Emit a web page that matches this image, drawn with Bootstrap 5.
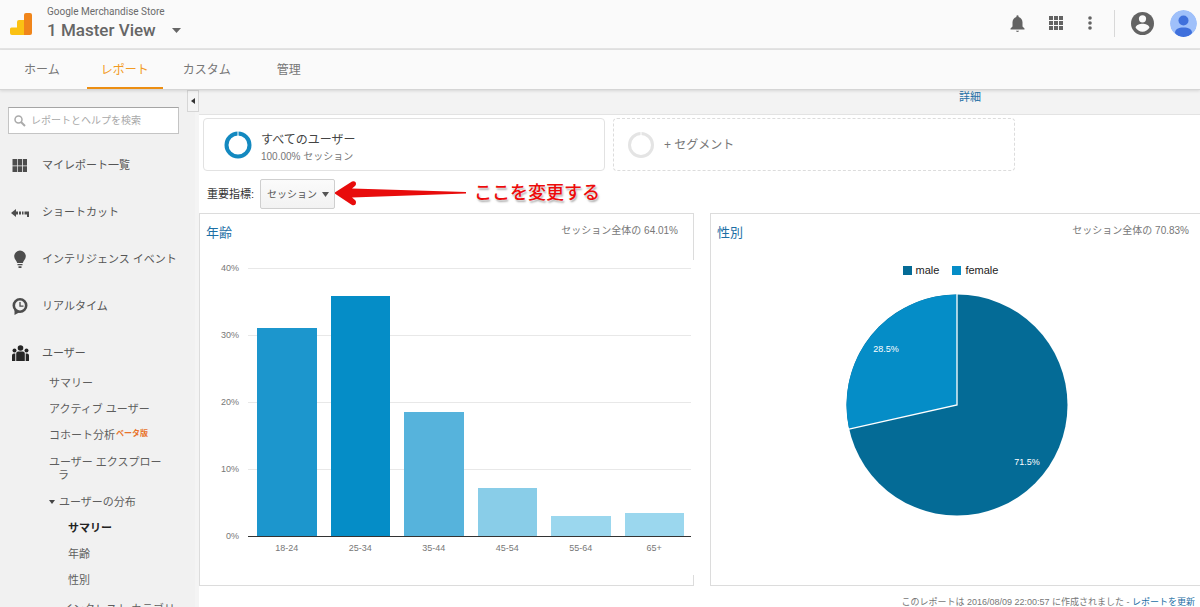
<!DOCTYPE html>
<html lang="ja">
<head>
<meta charset="utf-8">
<meta name="viewport" content="width=device-width, initial-scale=1">
<title>1 Master View - ユーザーの分布</title>
<link href="https://cdn.jsdelivr.net/npm/bootstrap@5.3.0/dist/css/bootstrap.min.css" rel="stylesheet">
<style>
  body { font-family: "Liberation Sans", "Noto Sans CJK JP", sans-serif; font-size: 11px; line-height: 14px; color: #555; background: #fff; }
  a { color: #1d6fa5; text-decoration: none; }
  svg { display: block; flex: none; }

  .topbar { height: 50px; background: #fafafa; border-bottom: 2px solid #e4e4e4; padding: 0 3px 0 10px; font-family: Roboto, "Noto Sans CJK JP", sans-serif; color: #6b6b6b; }
  .account { margin-left: 15px; padding-bottom: 2px; }
  .account-name { font-size: 10px; line-height: 14px; }
  .view-name { font-size: 17px; line-height: 22px; font-weight: 500; }
  .icon-btn { border: 0; background: none; padding: 0; color: #666; }
  .top-icons { gap: 24px; padding-bottom: 2px; }
  .top-accounts { gap: 16px; border-left: 1px solid #d8d8d8; padding-left: 16px; margin-left: -3px; }

  .main-tabs { height: 40px; background: #fafafa; border-bottom: 1px solid #d5d5d5; box-shadow: 0 1px 3px rgba(0,0,0,.12); padding-left: 4px; z-index: 2; }
  .main-tabs .nav-link { font-size: 12px; line-height: 16px; color: #777; padding: 12px 20px 9px; border-bottom: 2px solid transparent; }
  .main-tabs .nav-link.active { color: #f29b23; border-bottom-color: #ec8e12; padding-left: 14px; padding-right: 14px; margin-left: 7px; }
  .main-tabs .nav-link:last-child { margin-left: 6px; }

  .side { width: 199px; flex: none; background: #f1f1f1; overflow: hidden; box-shadow: inset -4px 0 #f4f4f4; }
  .collapse-btn { top: 0; right: 0; width: 12px; height: 22px; border: 1px solid #d6d6d6; background: #f4f4f4; padding: 0; }
  .search-box { margin: 17px 20px 0 8px; height: 27px; background: #fff; border: 1px solid #c4c4c4; border-top-color: #a5a5a5; padding: 0 5px; gap: 5px; }
  .search-box input { font-size: 10px; line-height: 14px; min-width: 0; border: 0; padding: 0; outline: 0; background: none; color: #555; }
  .search-box input::placeholder { color: #a9a9a9; opacity: 1; }
  .side-menu { gap: 12px; margin-top: 13px; }
  .side-menu .nav-link { height: 35px; padding: 0 0 0 11px; color: #555; gap: 12px; white-space: nowrap; }
  .side-sub a { display: flex; align-items: center; height: 26px; padding-left: 49px; color: #5e5e5e; white-space: nowrap; }
  .side-sub .two-line { display: block; height: 41px; line-height: 13px; padding: 8px 0 0 54px; text-indent: -5px; }
  .side-sub .inner { padding-left: 68px; }
  .side-sub .last-line { height: 32px; padding-left: 62px; }
  .side-sub .current { font-weight: 700; color: #222; }
  .beta { font-size: 8px; line-height: 10px; color: #e8722a; font-weight: 700; margin-left: 1px; padding-bottom: 2px; }

  .strip { height: 25px; background: #f3f3f3; border-bottom: 1px solid #e3e3e3; padding-right: 219px; }
  .segments { display: grid; grid-template-columns: repeat(2, minmax(0, 402px)); gap: 8px; padding: 3px 4px 0; }
  .segment { height: 53px; border: 1px solid #e2e2e2; border-radius: 4px; padding: 0 20px; gap: 9px; background: #fff; text-align: left; color: #444; }
  .segment.empty { border: 1px dashed #dcdcdc; padding: 0 13px; color: #777; }
  .segment-name { font-size: 12px; line-height: 16px; }
  .segment-text { padding-top: 9px; }
  .segment-share { font-size: 10px; line-height: 18px; color: #777; }
  .metric-row { height: 42px; padding: 4px 0 0 8px; color: #333; }
  .metric-pick { margin-left: 6px; }
  .metric-pick select { appearance: none; height: 30px; width: 75px; border: 1px solid #cfcfcf; border-radius: 2px; background: linear-gradient(#fbfbfb, #f2f2f2); color: #555; font-size: 10px; line-height: 14px; padding: 1px 6px 0; }
  .metric-pick svg { right: 6px; top: 13px; pointer-events: none; }
  .pointer { margin-left: -1px; }
  .note { font-size: 18px; line-height: 24px; font-weight: 500; color: #ec0b0b; text-shadow: 0 0 2px #fff, 1px 2px 2px rgba(0,0,0,.35); padding-bottom: 2px; }

  .panels { display: grid; grid-template-columns: 1fr 1fr; gap: 16px; margin-right: -5px; }
  .panel { height: 373px; border: 1px solid #dcdcdc; }
  .panel-top { height: 46px; padding: 10px 15px 0 6px; }
  .panel-title { font-size: 13px; line-height: 18px; margin: 0; color: #1d6fa5; font-weight: 400; }
  .panel-share { font-size: 10px; line-height: 14px; color: #777; }

  .bar-chart { background: #fff; margin-right: -1px; height: 315px; padding: 8px 3px 0 20px; font-size: 9px; line-height: 12px; color: #777; gap: 9px; }
  .y-axis { height: 280px; width: 19px; margin-top: -6px; text-align: right; }
  .plot { height: 269px; border-bottom: 1px solid #333; padding: 0 7px 0 9px; gap: 14px; background: linear-gradient(#e8e8e8 1px, transparent 1px) 0 0 / 100% 67px; }
  .bar { flex: 1 1 0; }
  .x-axis { padding: 5px 7px 0 9px; gap: 14px; text-align: center; }
  .x-axis span { flex: 1 1 0; }

  .pie-area { padding-right: 2px; }
  .legend-row { font-size: 11px; line-height: 14px; color: #222; gap: 13px; padding-top: 3px; margin-right: 12px; }
  .swatch { width: 9px; height: 9px; margin-right: 4px; }
  .pie { margin: 17px auto 0; }
  .pie text { font-size: 9px; fill: #fff; text-anchor: middle; }
  .report-foot { font-size: 9px; line-height: 12px; padding: 10px 5px 0; color: #777; white-space: nowrap; }
</style>
</head>
<body class="vh-100 overflow-hidden d-flex flex-column">

<header class="topbar d-flex align-items-center flex-shrink-0">
  <svg width="22" height="22" viewBox="0 0 22 22" aria-hidden="true">
    <path d="M1.500 14.500H7V9a2 2 0 0 1 2-2h6v15H2a2 2 0 0 1-2-2v-4a1.500 1.500 0 0 1 1.500-1.500z" fill="#fbc113"/>
    <path d="M16 0h4a2 2 0 0 1 2 2v18a2 2 0 0 1-2 2h-6V2a2 2 0 0 1 2-2z" fill="#f0851a"/>
  </svg>
  <div class="account">
    <div class="account-name">Google Merchandise Store</div>
    <button type="button" class="icon-btn view-name d-flex align-items-center">1 Master View
      <svg class="ms-3" width="9" height="5" viewBox="0 0 9 5" aria-hidden="true"><path d="M0 0h9L4.500 5z" fill="#666"/></svg>
    </button>
  </div>
  <div class="top-icons ms-auto d-flex align-items-center">
    <button type="button" class="icon-btn" aria-label="通知">
      <svg width="15" height="17" viewBox="0 0 15 17"><path d="M7.500 17c.9 0 1.500-.6 1.500-1.200H6c0 .6.600 1.200 1.500 1.200zM12.500 11.500V7.300c0-2.600-1.500-4.700-3.900-5.300V1.300a1.100 1.100 0 0 0-2.200 0V2C4 2.600 2.500 4.700 2.500 7.300v4.200L.5 13.500v1h14v-1z" fill="#636363"/></svg>
    </button>
    <button type="button" class="icon-btn" aria-label="アプリ">
      <svg width="14" height="14" viewBox="0 0 14 14" fill="#636363"><path d="M0 0h4v4H0zM5 0h4v4H5zM10 0h4v4h-4zM0 5h4v4H0zM5 5h4v4H5zM10 5h4v4h-4zM0 10h4v4H0zM5 10h4v4H5zM10 10h4v4h-4z"/></svg>
    </button>
    <button type="button" class="icon-btn" aria-label="メニュー">
      <svg width="6" height="14" viewBox="0 0 6 14" fill="#636363"><circle cx="3" cy="2" r="1.800"/><circle cx="3" cy="7" r="1.800"/><circle cx="3" cy="12" r="1.800"/></svg>
    </button>
    <div class="top-accounts d-flex align-items-center">
      <button type="button" class="icon-btn" aria-label="アカウント">
        <svg width="23" height="23" viewBox="0 0 23 23"><circle cx="11.500" cy="11.500" r="11.500" fill="#636363"/><circle cx="11.500" cy="6.800" r="3.600" fill="#fafafa"/><path d="M4.600 15.800c0-2.600 4.200-4 6.900-4s6.900 1.400 6.900 4c-1.500 2.400-4 3.900-6.900 3.900s-5.400-1.500-6.900-3.900z" fill="#fafafa"/></svg>
      </button>
      <button type="button" class="icon-btn rounded-circle overflow-hidden" aria-label="プロフィール">
        <svg width="27" height="27" viewBox="0 0 27 27"><circle cx="13.500" cy="13.500" r="13.500" fill="#9fc0fa"/><circle cx="13.500" cy="10.500" r="5" fill="#3f70dc"/><path d="M5 23c0-4 3.500-5.500 8.500-5.500S22 19 22 23c-2 2.600-5 4-8.500 4S7 25.600 5 23z" fill="#3f70dc"/></svg>
      </button>
    </div>
  </div>
</header>

<nav class="main-tabs nav flex-shrink-0 position-relative">
  <a class="nav-link" href="#">ホーム</a>
  <a class="nav-link active" href="#">レポート</a>
  <a class="nav-link" href="#">カスタム</a>
  <a class="nav-link" href="#">管理</a>
</nav>

<div class="d-flex flex-grow-1 overflow-hidden">
  <aside class="side position-relative">
    <button type="button" class="collapse-btn position-absolute d-flex align-items-center justify-content-center" aria-label="サイドバーを閉じる">
      <svg width="4" height="6" viewBox="0 0 4 6"><path d="M4 0v6L0 3z" fill="#333"/></svg>
    </button>
    <label class="search-box d-flex align-items-center">
      <svg width="12" height="12" viewBox="0 0 12 12" fill="none" stroke="#aaa" aria-hidden="true"><circle cx="4.500" cy="4.500" r="3.500" stroke-width="1.500"/><path d="M7 7l4 4" stroke-width="2"/></svg>
      <input type="text" class="flex-grow-1" placeholder="レポートとヘルプを検索" aria-label="レポートとヘルプを検索">
    </label>
    <ul class="side-menu nav flex-column flex-nowrap">
      <li><a class="nav-link d-flex align-items-center" href="#">
        <svg width="19" height="16" viewBox="0 0 19 16" fill="#4d4d4d"><path d="M1.500 2H6v6.500H1.500zM6.700 2h4.500v6.500H6.700zM12 2h4v6.500h-4zM1.500 9.300H6V15H1.500zM6.700 9.300h4.500V15H6.700zM12 9.300h4V15h-4z"/></svg>マイレポート一覧</a></li>
      <li><a class="nav-link d-flex align-items-center" href="#">
        <svg width="19" height="12" viewBox="0 0 19 12" fill="#4d4d4d"><path d="M0 7l5-4v2.500h2v3H5V11zM8 5.500h2v3H8zM11 5.500h1.500v3H11zM13.500 5.500H18V11h-2V8.500h-2.500z"/></svg>ショートカット</a></li>
      <li><a class="nav-link d-flex align-items-center" href="#">
        <svg width="19" height="20" viewBox="0 0 19 20" fill="#4d4d4d"><path d="M9 1.500a5.800 5.800 0 0 1 5.800 5.700c0 3-2.300 4-3 6.800H6.200c-.7-2.800-3-3.800-3-6.800A5.800 5.800 0 0 1 9 1.500zM6.500 15h5v1.200h-5zM7.500 17.200h3v1.800h-3z"/></svg>インテリジェンス イベント</a></li>
      <li><a class="nav-link d-flex align-items-center" href="#">
        <svg width="19" height="18" viewBox="0 0 19 18"><path d="M3.500 11v7l5.500-3z" fill="#4d4d4d"/><circle cx="9" cy="8.500" r="6.200" fill="#f1f1f1" stroke="#4d4d4d" stroke-width="2.600"/><path d="M9 5v4.200h3.500" fill="none" stroke="#4d4d4d" stroke-width="1.300"/></svg>リアルタイム</a></li>
      <li><a class="nav-link d-flex align-items-center" href="#">
        <svg width="19" height="18" viewBox="0 0 19 18" fill="#262626"><circle cx="9.500" cy="4" r="2.800"/><circle cx="3.500" cy="6.500" r="2"/><circle cx="15.500" cy="6.500" r="2"/><path d="M5.200 17V9.500q0-2 2-2h4.600q2 0 2 2V17zM1 17v-5.500Q1 9.500 3 9.500h1.300V17zM14.700 17V9.500H16q2 0 2 2V17z"/></svg>ユーザー</a></li>
    </ul>
    <ul class="side-sub list-unstyled mb-0">
      <li><a href="#">サマリー</a></li>
      <li><a href="#">アクティブ ユーザー</a></li>
      <li><a href="#">コホート分析 <span class="beta">ベータ版</span></a></li>
      <li><a class="two-line" href="#">ユーザー エクスプロー<br><span class="ps-1">ラ</span></a></li>
      <li><a href="#"><svg class="me-1" width="6" height="4" viewBox="0 0 6 4"><path d="M0 0h6L3 4z" fill="#444"/></svg>ユーザーの分布</a></li>
      <li><a class="inner current" href="#">サマリー</a></li>
      <li><a class="inner" href="#">年齢</a></li>
      <li><a class="inner" href="#">性別</a></li>
      <li><a class="last-line" href="#">インタレスト カテゴリ</a></li>
    </ul>
  </aside>

  <main class="flex-grow-1 overflow-hidden">
    <div class="strip d-flex justify-content-end"><a href="#">詳細</a></div>

    <div class="segments">
      <button type="button" class="segment d-flex align-items-center">
        <svg width="28" height="28" viewBox="0 0 28 28" fill="none"><circle cx="14" cy="14" r="11.500" stroke="#1389c0" stroke-width="4"/><path d="M14 0v5" stroke="#fff" stroke-width="1"/></svg>
        <span class="segment-text"><span class="segment-name d-block">すべてのユーザー</span><span class="segment-share d-block">100.00% セッション</span></span>
      </button>
      <button type="button" class="segment empty d-flex align-items-center">
        <svg width="28" height="28" viewBox="0 0 28 28" fill="none"><circle cx="14" cy="14" r="11.500" stroke="#e4e4e4" stroke-width="3"/><path d="M14 0v5" stroke="#fff" stroke-width="1"/></svg>
        <span class="segment-name">+ セグメント</span>
      </button>
    </div>

    <div class="metric-row d-flex align-items-center">
      <label for="metric">重要指標:</label>
      <div class="metric-pick position-relative">
        <select id="metric"><option>セッション</option></select>
        <svg class="position-absolute" width="7" height="5" viewBox="0 0 7 5" aria-hidden="true"><path d="M0 0h7L3.500 5z" fill="#555"/></svg>
      </div>
      <svg class="pointer" width="132" height="26" viewBox="0 0 132 26" aria-hidden="true"><path d="M0 12L18 .5Q22-.5 22 3q0 1-1 2l-3 2.500L132 11v1.500L18 16.500l3 2.500q1 1 1 2 0 4-4 3z" fill="#e80c0c"/></svg>
      <span class="note ms-2">ここを変更する</span>
    </div>

    <div class="panels">
      <section class="panel">
        <div class="panel-top d-flex justify-content-between">
          <h2 class="panel-title">年齢</h2><span class="panel-share">セッション全体の 64.01%</span>
        </div>
        <div class="bar-chart d-flex">
          <div class="y-axis d-flex flex-column justify-content-between"><span>40%</span><span>30%</span><span>20%</span><span>10%</span><span>0%</span></div>
          <div class="flex-grow-1">
            <div class="plot d-flex align-items-end">
              <div class="bar" style="height:77.800%;background:#1c96cd"></div>
              <div class="bar" style="height:89.700%;background:#058dc7"></div>
              <div class="bar" style="height:46.400%;background:#56b3dc"></div>
              <div class="bar" style="height:18.100%;background:#89cde8"></div>
              <div class="bar" style="height:7.500%;background:#9bd7ee"></div>
              <div class="bar" style="height:8.500%;background:#9bd7ee"></div>
            </div>
            <div class="x-axis d-flex"><span>18-24</span><span>25-34</span><span>35-44</span><span>45-54</span><span>55-64</span><span>65+</span></div>
          </div>
        </div>
      </section>
      <section class="panel">
        <div class="panel-top d-flex justify-content-between">
          <h2 class="panel-title">性別</h2><span class="panel-share">セッション全体の 70.83%</span>
        </div>
        <div class="pie-area">
          <div class="legend-row d-flex justify-content-center">
            <span class="d-flex align-items-center"><span class="swatch" style="background:#046b96"></span>male</span>
            <span class="d-flex align-items-center"><span class="swatch" style="background:#058dc7"></span>female</span>
          </div>
          <svg class="pie" width="222" height="222" viewBox="0 0 222 222" role="img" aria-label="male 71.5%, female 28.5%">
            <circle cx="111" cy="111" r="110.500" fill="#046b96"/>
            <path d="M111 111L3.200 135.100A110.500 110.500 0 0 1 111 .5z" fill="#058dc7"/>
            <path d="M111 0v111L3 135.200" fill="none" stroke="#fff" stroke-width="1.300"/>
            <text x="40" y="58">28.5%</text><text x="181" y="171">71.5%</text>
          </svg>
        </div>
      </section>
    </div>
    <div class="report-foot text-end">このレポートは 2016/08/09 22:00:57 に作成されました - <a href="#">レポートを更新</a></div>
  </main>
</div>

<script src="https://cdn.jsdelivr.net/npm/bootstrap@5.3.0/dist/js/bootstrap.bundle.min.js"></script>
</body>
</html>
